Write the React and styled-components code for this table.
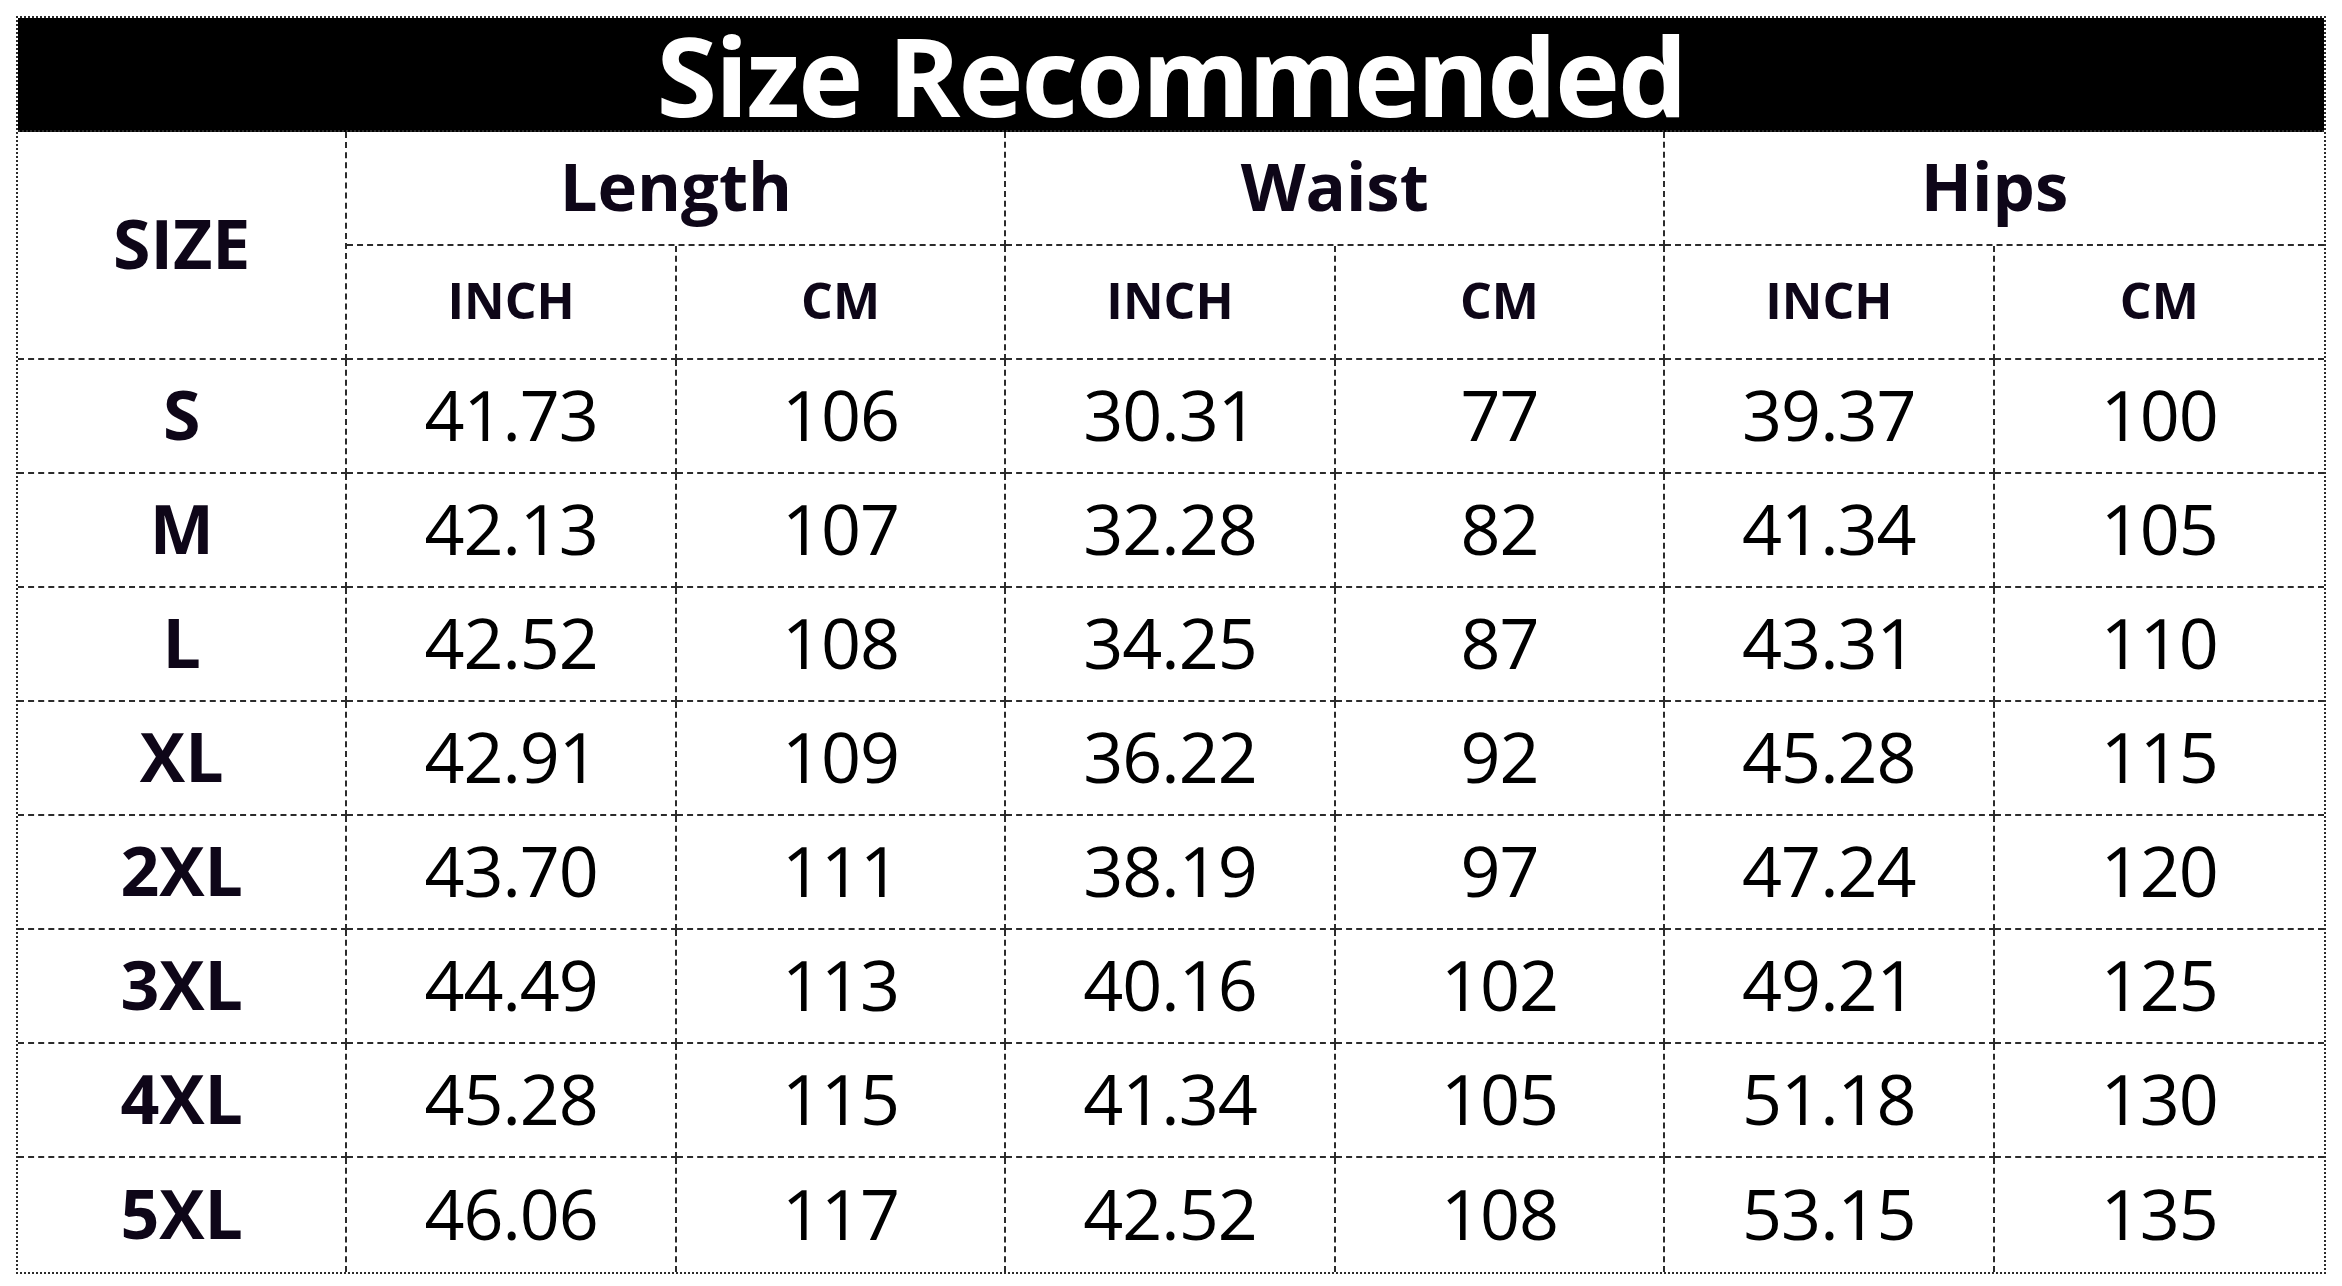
import React from 'react';
import styled, { createGlobalStyle } from 'styled-components';

const GlobalStyle = createGlobalStyle`
  body {
    margin: 0;
    background: #ffffff;
    font-family: "Open Sans", "Noto Sans", sans-serif;
  }
`

const Page = styled.main`
  padding: 16px;
`

const Table = styled.section`
  box-sizing: border-box;
  width: 2310px;
  display: grid;
  grid-template-columns: repeat(7, 1fr);
  grid-auto-rows: 114px;
  border: 2px dotted #2b2b2b;
`

const Title = styled.h1`
  grid-column: 1 / -1;
  margin: 0;
  background: #000;
  color: #fff;
  display: flex;
  align-items: center;
  justify-content: center;
  font-size: 110px;
  line-height: 1;
  font-weight: 700;
  letter-spacing: -2px;
  border-bottom: 2px dotted #2b2b2b;
`

const Cell = styled.div`
  box-sizing: border-box;
  display: flex;
  align-items: center;
  justify-content: center;
  line-height: 1;
  padding-bottom: 5px;
  border-right: ${p => (p.$last ? 'none' : '2px dashed #2b2b2b')};
  border-bottom: ${p => (p.$bottom ? 'none' : '2px dashed #2b2b2b')};
  grid-column: ${p => (p.$span ? `span ${p.$span}` : 'auto')};
  grid-row: ${p => (p.$rows ? `span ${p.$rows}` : 'auto')};
  color: ${p => (p.$head ? '#0e0618' : '#000')};
  font-size: ${p => p.$size || 70}px;
  font-weight: ${p => (p.$head ? 700 : 400)};
  letter-spacing: ${p => (p.$head ? 0 : -1)}px;
`

const groups = ['Length', 'Waist', 'Hips']

const rows = [
  ['S', '41.73', '106', '30.31', '77', '39.37', '100'],
  ['M', '42.13', '107', '32.28', '82', '41.34', '105'],
  ['L', '42.52', '108', '34.25', '87', '43.31', '110'],
  ['XL', '42.91', '109', '36.22', '92', '45.28', '115'],
  ['2XL', '43.70', '111', '38.19', '97', '47.24', '120'],
  ['3XL', '44.49', '113', '40.16', '102', '49.21', '125'],
  ['4XL', '45.28', '115', '41.34', '105', '51.18', '130'],
  ['5XL', '46.06', '117', '42.52', '108', '53.15', '135'],
]

export default function App() {
  return (
    <Page>
      <GlobalStyle />
      <Table>
        <Title>Size Recommended</Title>
        <Cell $head $rows={2} $size={68}>SIZE</Cell>
        {groups.map((g, i) => (
          <Cell key={g} $head $span={2} $size={67} $last={i === 2}>{g}</Cell>
        ))}
        {groups.map((g, i) => (
          <React.Fragment key={g + '-units'}>
            <Cell $head $size={50}>INCH</Cell>
            <Cell $head $size={50} $last={i === 2}>CM</Cell>
          </React.Fragment>
        ))}
        {rows.map((r, ri) =>
          r.map((v, ci) => (
            <Cell
              key={ri + '-' + ci}
              $head={ci === 0}
              $size={ci === 0 ? 68 : 70}
              $last={ci === 6}
              $bottom={ri === rows.length - 1}
            >
              {v}
            </Cell>
          ))
        )}
      </Table>
    </Page>
  );
}
